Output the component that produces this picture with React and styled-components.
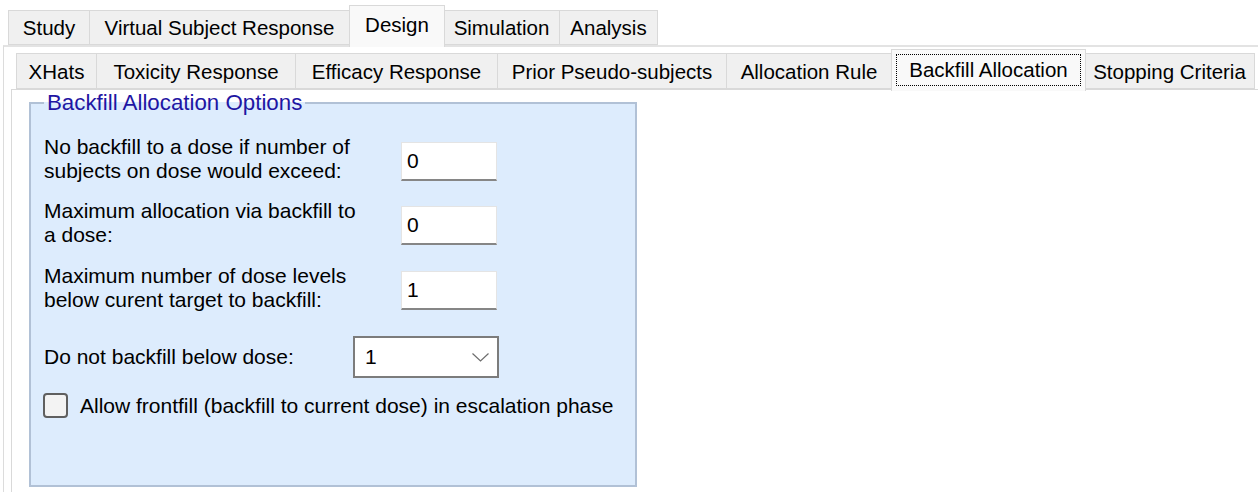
import * as React from 'react';
import styled, { createGlobalStyle } from 'styled-components';

const GlobalStyle = createGlobalStyle`
  html, body {
    margin: 0;
    padding: 0;
    background: #ffffff;
  }
  body {
    font-family: "Liberation Sans", Arial, sans-serif;
    color: #000;
    overflow: hidden;
  }
`;

const Window = styled.div`
  width: 1258px;
  height: 492px;
  padding-top: 5px;
  box-sizing: border-box;
  display: flex;
  flex-direction: column;
  overflow: hidden;
`;

const TabStrip = styled.div`
  display: flex;
  align-items: flex-end;
  height: ${(p) => p.$height}px;
  padding-left: ${(p) => p.$indent}px;
  position: relative;
  z-index: 1;
  flex-shrink: 0;
`;

const Tab = styled.div`
  box-sizing: border-box;
  width: ${(p) => p.$w}px;
  height: ${(p) => (p.$active ? p.$h + p.$lift + 2 : p.$h)}px;
  margin-bottom: ${(p) => (p.$active ? -2 : 0)}px;
  display: flex;
  align-items: center;
  justify-content: center;
  background: ${(p) => (p.$active ? '#f9f9f9' : '#f0f0f0')};
  border: 1px solid #d9d9d9;
  border-bottom: ${(p) => (p.$active ? 'none' : '1px solid #d9d9d9')};
  border-left: ${(p) => (p.$first || p.$active ? '1px solid #d9d9d9' : 'none')};
  font-size: 20.5px;
  white-space: nowrap;
  padding-top: ${(p) => (p.$active ? 0 : 1)}px;
  padding-bottom: ${(p) => (p.$active ? p.$lift - 2 : 0)}px;
  ${(p) => p.$active && 'margin-left: -1px; margin-right: -1px; position: relative; z-index: 2;'}
`;

const FocusRing = styled.span`
  display: flex;
  align-items: center;
  justify-content: center;
  box-sizing: border-box;
  width: calc(100% - 8px);
  height: 32px;
  outline: 1px dotted #000;
  outline-offset: -1px;
`;

const OuterPanel = styled.div`
  flex: 1;
  margin-left: 3px;
  border-top: 2px solid #e3e3e3;
  border-left: 1px solid #dcdcdc;
  padding: 2px 0 0 7px;
  display: flex;
  flex-direction: column;
`;

const InnerPanel = styled.div`
  flex: 1;
  border-top: 1px solid #d9d9d9;
  border-left: 1px solid #d9d9d9;
  padding: 1px 0 0 17px;
  background: #ffffff;
`;

const Group = styled.fieldset`
  box-sizing: border-box;
  width: 608px;
  height: 396px;
  margin: 0;
  padding: 0 0 0 13px;
  border: 2px solid #b1c1d6;
  background: #ddecfd;
  display: flex;
  flex-direction: column;
`;

const Legend = styled.legend`
  padding: 0 3px;
  margin-left: 0;
  font-size: 22.3px;
  line-height: 24px;
  color: #1f16a3;
  background: transparent;
`;

const Fields = styled.div`
  display: flex;
  flex-direction: column;
  padding-top: 20px;
`;

const FieldRow = styled.div`
  display: grid;
  grid-template-columns: 357px 96px;
  align-items: center;
  margin-bottom: ${(p) => p.$gap}px;
`;

const Label = styled.div`
  font-size: 21px;
  line-height: 24px;
  white-space: nowrap;
`;

const TextBox = styled.div`
  box-sizing: border-box;
  height: 39px;
  margin-top: 5px;
  background: #ffffff;
  border: 1px solid #e4e4e4;
  border-bottom: 2px solid #868686;
  font-size: 21px;
  display: flex;
  align-items: center;
  padding-left: 5px;
`;

const SelectRow = styled.div`
  display: flex;
  align-items: center;
  margin-top: 24px;
`;

const SelectLabel = styled(Label)`
  width: 309px;
`;

const Select = styled.div`
  box-sizing: border-box;
  width: 146px;
  height: 42px;
  background: #ffffff;
  border: 2px solid #7c7c7c;
  display: flex;
  align-items: center;
  justify-content: space-between;
  padding: 0 8px 0 10px;
  font-size: 21px;
`;

const CheckRow = styled.label`
  display: flex;
  align-items: center;
  gap: 12px;
  margin-top: 15px;
  margin-left: -1px;
  font-size: 21px;
  line-height: 24px;
`;

const CheckBox = styled.span`
  box-sizing: border-box;
  width: 25px;
  height: 25px;
  border: 2px solid #5f5f5f;
  border-radius: 4px;
  background: #f3f3f3;
`;

const topTabs = [
  { label: 'Study', w: 82 },
  { label: 'Virtual Subject Response', w: 260 },
  { label: 'Design', w: 96, active: true },
  { label: 'Simulation', w: 116 },
  { label: 'Analysis', w: 98 },
];

const subTabs = [
  { label: 'XHats', w: 81 },
  { label: 'Toxicity Response', w: 199 },
  { label: 'Efficacy Response', w: 202 },
  { label: 'Prior Pseudo-subjects', w: 229 },
  { label: 'Allocation Rule', w: 165 },
  { label: 'Backfill Allocation', w: 195, active: true },
  { label: 'Stopping Criteria', w: 170 },
];

const fields = [
  { lines: ['No backfill to a dose if number of', 'subjects on dose would exceed:'], value: '0', gap: 16 },
  { lines: ['Maximum allocation via backfill to', 'a dose:'], value: '0', gap: 17 },
  { lines: ['Maximum number of dose levels', 'below curent target to backfill:'], value: '1', gap: 0 },
];

const Chevron = () => (
  <svg width="17" height="9" viewBox="0 0 17 9">
    <polyline points="0.5,0.5 8.5,8 16.5,0.5" fill="none" stroke="#6d6d6d" strokeWidth="1.2" />
  </svg>
);

export default function App() {
  return (
    <>
      <GlobalStyle />
      <Window>
        <TabStrip $height={40} $indent={8}>
          {topTabs.map((t, i) => (
            <Tab key={t.label} $w={t.w} $h={35} $lift={5} $active={t.active} $first={i === 0}>
              {t.label}
            </Tab>
          ))}
        </TabStrip>
        <OuterPanel>
          <TabStrip $height={40} $indent={5}>
            {subTabs.map((t, i) => (
              <Tab key={t.label} $w={t.w} $h={36} $lift={4} $active={t.active} $first={i === 0}>
                {t.active ? <FocusRing>{t.label}</FocusRing> : t.label}
              </Tab>
            ))}
          </TabStrip>
          <InnerPanel>
            <Group>
              <Legend>Backfill Allocation Options</Legend>
              <Fields>
                {fields.map((f) => (
                  <FieldRow key={f.lines[0]} $gap={f.gap}>
                    <Label>
                      {f.lines[0]}
                      <br />
                      {f.lines[1]}
                    </Label>
                    <TextBox>{f.value}</TextBox>
                  </FieldRow>
                ))}
                <SelectRow>
                  <SelectLabel>Do not backfill below dose:</SelectLabel>
                  <Select>
                    <span>1</span>
                    <Chevron />
                  </Select>
                </SelectRow>
                <CheckRow>
                  <CheckBox />
                  Allow frontfill (backfill to current dose) in escalation phase
                </CheckRow>
              </Fields>
            </Group>
          </InnerPanel>
        </OuterPanel>
      </Window>
    </>
  );
}
